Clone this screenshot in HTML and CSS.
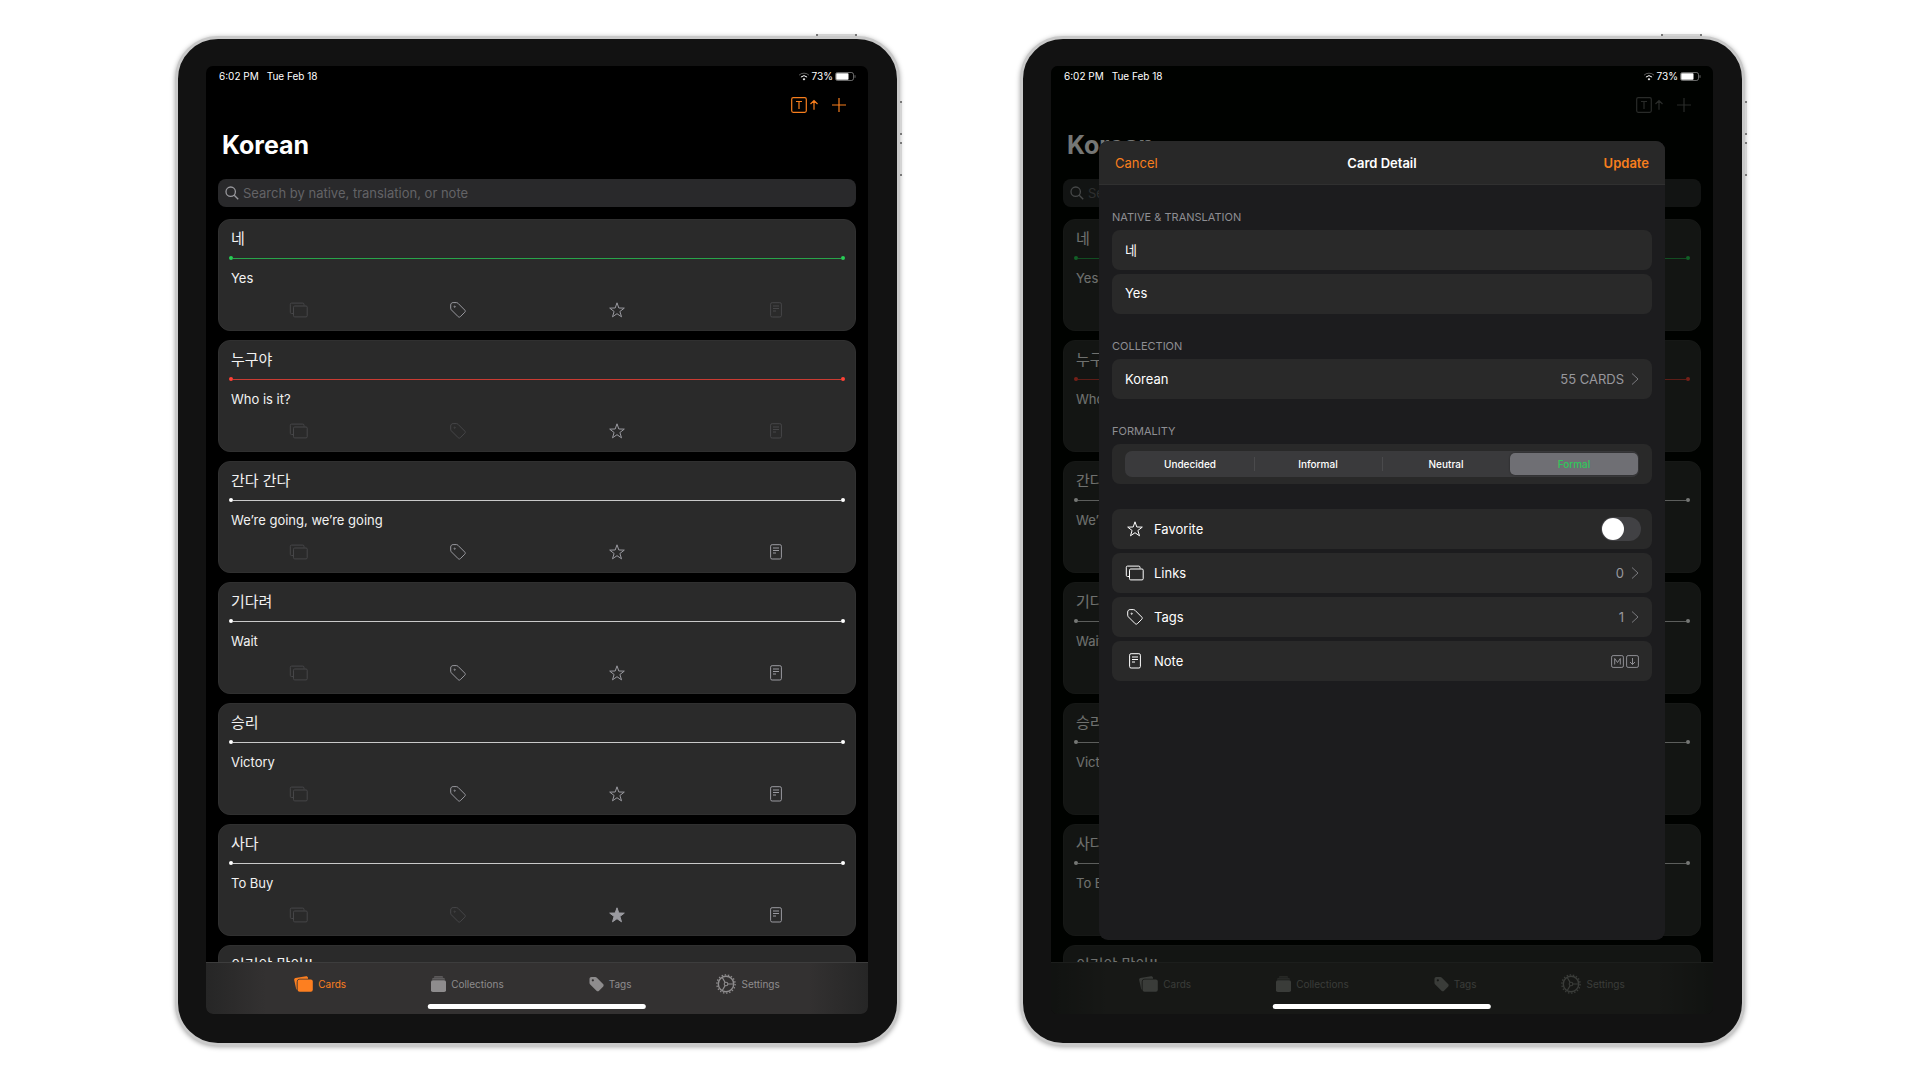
FILE: index.html
```html
<!DOCTYPE html>
<html lang="en">
<head>
<meta charset="utf-8">
<title>Korean cards</title>
<link rel="stylesheet" href="styles.css">
</head>
<body>
<svg class="sprite" aria-hidden="true">
  <symbol id="links" viewBox="0 0 20 18"><path d="M4.500 12.500H2.500a1.200 1.200 0 0 1-1.200-1.200V3.300a1.200 1.200 0 0 1 1.200-1.200h11.300A1.200 1.200 0 0 1 15 3.300V4.500"/><rect x="4.500" y="5" width="13.700" height="10.900" rx="1.200"/></symbol>
  <symbol id="tag" viewBox="0 0 18 18"><path d="M1.700 4v3.200c0 .7.200 1.200.7 1.700l6.800 6.800c.6.6 1.500.6 2.100 0l4.500-4.500c.6-.6.6-1.500 0-2.100L9 2.300c-.5-.5-1-.7-1.700-.7H4.100C2.700 1.600 1.700 2.600 1.700 4z"/><circle cx="5.700" cy="5.700" r=".6"/></symbol>
  <symbol id="star" viewBox="0 0 18 18"><path d="M9 1.800l1.800 5.200 5.500.1-4.400 3.400 1.600 5.300L9 12.700l-4.500 3.100 1.600-5.300L1.700 7.100l5.500-.1z"/></symbol>
  <symbol id="note" viewBox="0 0 18 18"><rect x="3.600" y="1.700" width="10.800" height="14.300" rx="1.500"/><path d="M6 5h6M6 7.500h6M6 10h3"/></symbol>
  <symbol id="search" viewBox="0 0 14 14"><circle cx="5.700" cy="5.700" r="4.700"/><path d="M9.200 9.200l4 4"/></symbol>
  <symbol id="sort" viewBox="0 0 28 16"><rect x=".7" y=".7" width="14.600" height="14.600" rx="1.500"/><path d="M5 4.500h6M8 4.500V12M23 12.700V3.500M19.500 7L23 3.500 26.500 7"/></symbol>
  <symbol id="plus" viewBox="0 0 14 14"><path d="M7 0v14M0 7h14"/></symbol>
  <symbol id="wifi" viewBox="0 0 12 9"><path d="M1 3.200a7.200 7.200 0 0 1 10 0" opacity=".35"/><path d="M2.900 5.100a4.500 4.500 0 0 1 6.200 0"/><path d="M6 8.400L4.600 6.900a2 2 0 0 1 2.800 0z" fill="currentColor" stroke="none"/></symbol>
  <symbol id="battery" viewBox="0 0 21 9"><rect x=".5" y=".5" width="18" height="8" rx="2" opacity=".4"/><rect x="1.200" y="1.200" width="12.300" height="6.600" rx=".8" fill="currentColor" stroke="none"/><path d="M20 3.200v2.600" opacity=".4"/></symbol>
  <symbol id="chevron" viewBox="0 0 8 12"><path d="M1 .5L7 6l-6 5.500"/></symbol>
  <symbol id="markdown" viewBox="0 0 28 13"><rect x=".6" y=".6" width="11.800" height="11.800" rx="1.500"/><path d="M3.700 9.500v-6l2.800 4 2.800-4v6"/><rect x="15.600" y=".6" width="11.800" height="11.800" rx="1.500"/><path d="M21.500 3v6.500M19 7l2.500 2.500L24 7"/></symbol>
  <symbol id="tab-cards" viewBox="0 0 19 16"><path d="M2.300 13.500L.2 3.900C0 3 .6 2.100 1.500 1.900L12 .2c.9-.2 1.700.4 1.900 1.300l.2 1.200H5.900C4 2.700 2.700 4 2.700 5.900v7.600z"/><rect x="3.600" y="3.600" width="15.200" height="12.200" rx="2"/></symbol>
  <symbol id="tab-collections" viewBox="0 0 15 16"><rect x="0" y="4.300" width="15" height="11.700" rx="1.800"/><path d="M1 3.600c.1-.9.600-1.300 1.300-1.300h10.400c.7 0 1.200.4 1.300 1.300z" opacity=".65"/><path d="M2.800 1.700C2.900.5 3.400 0 4.300 0h6.400c.9 0 1.400.5 1.500 1.700z" opacity=".45"/></symbol>
  <symbol id="tab-tags" viewBox="0 0 16 16"><path fill-rule="evenodd" d="M.5 2.700v4c0 .7.300 1.300.8 1.800l6.700 6.600c.8.8 2 .8 2.700 0l4.300-4.300c.8-.8.8-1.900 0-2.700L8.400 1.400C7.900.9 7.300.6 6.600.6h-4C1.400.6.500 1.500.500 2.700zm3.600 2.600a1.200 1.200 0 1 1 0-2.400 1.200 1.200 0 0 1 0 2.400z"/></symbol>
  <symbol id="tab-settings" viewBox="0 0 20 20"><g fill="none" stroke="currentColor"><circle cx="10" cy="10" r="9.100" stroke-width="1.400" stroke-dasharray="1.400 1.776"/><circle cx="10" cy="10" r="7.700" stroke-width="1.400"/><circle cx="10" cy="10" r="1.800" stroke-width="1.100"/><path d="M11.800 10h5.800M9.100 8.400L6.200 3.400M9.100 11.600l-2.900 5" stroke-width="1.100"/></g></symbol>
</svg>

<main class="stage">
  <section class="device" aria-label="Card list">
    <span class="power-button"></span><span class="volume-button"></span><span class="volume-button volume-down"></span>
    <div class="screen"></div>
  </section>

  <section class="device" aria-label="Card detail">
    <span class="power-button"></span><span class="volume-button"></span><span class="volume-button volume-down"></span>
    <div class="screen dimmed">
      <form class="sheet">
        <header class="sheet-header">
          <button class="text-button" type="button">Cancel</button>
          <h2 class="sheet-title">Card Detail</h2>
          <button class="text-button strong" type="button">Update</button>
        </header>
        <div class="sheet-body">
          <section class="group">
            <h3 class="group-title">NATIVE &amp; TRANSLATION</h3>
            <input class="row field" aria-label="Native" value="네" lang="ko">
            <input class="row field" aria-label="Translation" value="Yes">
          </section>
          <section class="group">
            <h3 class="group-title">COLLECTION</h3>
            <button class="row" type="button"><span class="row-label">Korean</span><span class="row-value">55 CARDS</span><svg class="chevron"><use href="#chevron"/></svg></button>
          </section>
          <section class="group">
            <h3 class="group-title">FORMALITY</h3>
            <div class="row">
              <div class="segments" role="radiogroup" aria-label="Formality">
                <label class="segment"><input type="radio" name="formality"><span>Undecided</span></label>
                <label class="segment"><input type="radio" name="formality"><span>Informal</span></label>
                <label class="segment"><input type="radio" name="formality"><span>Neutral</span></label>
                <label class="segment"><input type="radio" name="formality" checked><span>Formal</span></label>
              </div>
            </div>
          </section>
          <section class="group options">
            <label class="row"><svg class="icon"><use href="#star"/></svg><span class="row-label">Favorite</span><input class="toggle" type="checkbox"></label>
            <button class="row" type="button"><svg class="icon"><use href="#links"/></svg><span class="row-label">Links</span><span class="row-value">0</span><svg class="chevron"><use href="#chevron"/></svg></button>
            <button class="row" type="button"><svg class="icon"><use href="#tag"/></svg><span class="row-label">Tags</span><span class="row-value">1</span><svg class="chevron"><use href="#chevron"/></svg></button>
            <button class="row" type="button"><svg class="icon"><use href="#note"/></svg><span class="row-label">Note</span><svg class="markdown"><use href="#markdown"/></svg></button>
          </section>
        </div>
      </form>
    </div>
  </section>
</main>
<script src="app.js"></script>
</body>
</html>
```
FILE: styles.css
```css
* { box-sizing: border-box; }

body {
  margin: 0;
  background: #fff;
  color: #fff;
  font: 13px/20px Inter, "Noto Sans CJK KR", sans-serif;
}

button, input { font: inherit; color: inherit; }
button { background: none; border: 0; padding: 0; cursor: pointer; }
a { color: inherit; text-decoration: none; }
h1, h2, h3, p { margin: 0; }
svg { display: block; flex: none; fill: none; stroke: currentColor; }
.sprite { position: absolute; width: 0; height: 0; }

.stage {
  display: grid;
  grid-template-columns: 1fr 1fr;
  gap: 120px;
  padding: 36px 175px 34px;
}

/* Tablet shell */
.device {
  position: relative;
  padding: 27px 29px 29px 28px;
  background: #121212;
  border: 3px solid #c9c9c9;
  border-radius: 43px;
  box-shadow: 0 1px 5px rgba(0, 0, 0, .35);
}
.power-button, .volume-button { position: absolute; background: #d4d4d4; }
.power-button {
  top: -5px;
  right: 40px;
  width: 41px;
  height: 2px;
  border: solid #777;
  border-width: 0 2px;
}
.volume-button {
  top: 62px;
  right: -5px;
  width: 2px;
  height: 34px;
  border: solid #777;
  border-width: 2px 0;
}
.volume-down { top: 103px; }

.screen {
  position: relative;
  display: flex;
  flex-direction: column;
  aspect-ratio: 662 / 948;
  overflow: hidden;
  background: #000;
  border-radius: 7px;
}

/* Status bar */
.status-bar {
  position: relative;
  z-index: 3;
  display: flex;
  align-items: center;
  gap: 8px;
  height: 20px;
  padding: 0 12px 0 13px;
  font-size: 10px;
}
.status-right { display: flex; align-items: center; gap: 2px; margin-left: auto; }
.wifi { width: 12px; height: 9px; }
.battery { width: 21px; height: 9px; }

/* List header */
.toolbar {
  display: flex;
  justify-content: flex-end;
  align-items: center;
  gap: 13px;
  height: 38px;
  padding-right: 22px;
  color: #f77e1d;
}
.sort-icon { width: 28px; height: 16px; stroke-width: 1.2; }
.plus-icon { width: 14px; height: 14px; stroke-width: 1.2; }
.title { padding: 1px 0 0 16px; font-size: 25px; line-height: 40px; font-weight: 700; }
.search {
  display: flex;
  align-items: center;
  gap: 4px;
  height: 28px;
  margin: 14px 12px 0;
  padding: 0 7px 1px;
  background: #29292b;
  border-radius: 8px;
  color: #98989d;
}
.search-icon { width: 14px; height: 14px; stroke-width: 1.3; }
.search-input { flex: 1; min-width: 0; padding: 0; border: 0; outline: 0; background: none; }
.search-input::placeholder { color: #636366; opacity: 1; }

/* Cards */
.cards {
  display: flex;
  flex-direction: column;
  gap: 9px;
  flex: 1;
  min-height: 0;
  overflow: hidden;
  margin: 0;
  padding: 12px 12px 0;
  list-style: none;
}
.card {
  flex: none;
  padding: 9px 0 8px;
  background: #2a2a2a;
  border: 1px solid #303030;
  border-radius: 12px;
}
.card-native, .card-translation { padding: 0 12px; color: #f2f2f2; }
.card-native { font-size: 15px; }
.rule {
  display: flex;
  align-items: center;
  height: 4px;
  margin: 7px 10px 8px;
  color: #fff;
}
.rule::before, .rule::after { content: ""; width: 4px; height: 4px; border-radius: 50%; background: currentColor; }
.rule span { flex: 1; height: 1px; background: currentColor; opacity: .75; }
.rule.formal { color: #28cd55; }
.rule.informal { color: #ff4136; }
.card-actions { display: grid; grid-template-columns: repeat(4, 1fr); margin-top: 10px; }
.card-action { display: grid; place-items: center; height: 24px; color: #9a9aa0; }
.card-action.muted { color: #464648; }
.card-action.filled svg { fill: currentColor; }
.icon { width: 20px; height: 18px; stroke-linejoin: round; }

/* Tab bar */
.tab-bar {
  display: flex;
  justify-content: center;
  gap: 85px;
  height: 52px;
  padding-top: 6px;
  background: linear-gradient(90deg, #262626, #333131 9%, #333131 91%, #262626);
  border-top: 1px solid #3d3d3d;
  color: #8e8c8d;
  font-size: 10px;
  line-height: 30px;
}
.tab { display: flex; align-items: center; gap: 5px; height: 30px; }
.tab.active { color: #fd7f20; }
.tab svg { width: 19px; height: 16px; fill: currentColor; stroke: none; }
.tab .small { width: 15px; }
.tab .gear { width: 20px; height: 20px; }
.home-indicator {
  position: absolute;
  z-index: 3;
  left: 50%;
  bottom: 5px;
  width: 33%;
  height: 5px;
  transform: translateX(-50%);
  border-radius: 3px;
  background: #fff;
}

/* Screen behind the sheet */
.dimmed::after {
  content: "";
  position: absolute;
  inset: 0;
  z-index: 1;
  background: rgba(0, 3, 0, .54);
}
.dimmed .toolbar { color: #5a5a5a; }
.dimmed .tab, .dimmed .tab.active { color: #7e7e7c; }

/* Card detail sheet */
.sheet {
  position: absolute;
  z-index: 2;
  inset: 75px 48px 74px;
  overflow: hidden;
  background: #1c1c1e;
  border-radius: 9px;
}
.sheet-header {
  display: grid;
  grid-template-columns: 1fr auto 1fr;
  align-items: center;
  height: 44px;
  padding: 0 16px;
  background: #282828;
  border-bottom: 1px solid #303030;
}
.sheet-title { font-size: 13px; line-height: 20px; font-weight: 600; }
.text-button { justify-self: start; color: #f77e1d; }
.text-button.strong { justify-self: end; font-weight: 600; }
.sheet-body { display: flex; flex-direction: column; gap: 22px; padding: 22px 13px; }
.group { display: flex; flex-direction: column; gap: 4px; }
.group-title { margin-bottom: -1px; color: #8e8e93; font-size: 11px; line-height: 20px; font-weight: 400; }
.options { padding-top: 3px; }
.row {
  display: flex;
  align-items: center;
  width: 100%;
  height: 40px;
  padding: 0 13px;
  background: #292929;
  border: 0;
  border-radius: 8px;
  text-align: left;
}
.field { padding-bottom: 2px; outline: 0; }
.row .icon { margin-right: 9px; }
.row-label { flex: 1; }
.row-value { color: #98989d; }
.chevron { width: 8px; height: 12px; margin-left: 7px; color: #7a7a7e; }
.markdown { width: 28px; height: 13px; color: #8e8e93; }

.segments {
  display: grid;
  grid-template-columns: repeat(4, 1fr);
  flex: 1;
  height: 26px;
  padding: 2px 1px;
  background: #3a3a3c;
  border-radius: 7px;
}
.segment { position: relative; display: grid; text-align: center; font-size: 10px; font-weight: 500; line-height: 22px; }
.segment input { position: absolute; opacity: 0; margin: 0; }
.segment span { border-radius: 5px; }
.segment + .segment::before {
  content: "";
  position: absolute;
  left: 0;
  top: 4px;
  width: 1px;
  height: 14px;
  background: #4a4a4c;
}
.segment:last-child::before { display: none; }
.segment input:checked + span { background: #6f6f74; color: #30c85a; box-shadow: 0 0 2px rgba(0, 0, 0, .4); }

.toggle {
  appearance: none;
  display: flex;
  align-items: center;
  width: 40px;
  height: 24px;
  margin: 0 -2px 0 0;
  padding: 1px;
  background: #414144;
  border-radius: 12px;
}
.toggle::before { content: ""; width: 22px; height: 22px; border-radius: 50%; background: #fff; }
```
FILE: app.js
```js
const cards = [
  { native: '네', translation: 'Yes', tone: 'formal', active: ['tag'] },
  { native: '누구야', translation: 'Who is it?', tone: 'informal', active: [] },
  { native: '간다 간다', translation: 'We’re going, we’re going', tone: '', active: ['tag', 'note'] },
  { native: '기다려', translation: 'Wait', tone: '', active: ['tag', 'note'] },
  { native: '승리', translation: 'Victory', tone: '', active: ['tag', 'note'] },
  { native: '사다', translation: 'To Buy', tone: '', active: ['note'], favorite: true },
  { native: '이거야 맞아!!', translation: '', tone: '', active: [] }
];

const action = (card, name) => {
  const on = name === 'star' || card.active.includes(name);
  const state = (on ? '' : ' muted') + (name === 'star' && card.favorite ? ' filled' : '');
  return `<button class="card-action${state}" type="button" aria-label="${name}"><svg class="icon"><use href="#${name}"/></svg></button>`;
};

const cardItem = card => `
  <li class="card">
    <p class="card-native" lang="ko">${card.native}</p>
    <div class="rule ${card.tone}"><span></span></div>
    <p class="card-translation">${card.translation}</p>
    <div class="card-actions">${['links', 'tag', 'star', 'note'].map(n => action(card, n)).join('')}</div>
  </li>`;

const listScreen = `
  <div class="status-bar">
    <span>6:02 PM</span><span>Tue Feb 18</span>
    <span class="status-right"><svg class="wifi"><use href="#wifi"/></svg>73%<svg class="battery"><use href="#battery"/></svg></span>
  </div>
  <div class="toolbar">
    <button type="button" aria-label="Sort"><svg class="sort-icon"><use href="#sort"/></svg></button>
    <button type="button" aria-label="Add card"><svg class="plus-icon"><use href="#plus"/></svg></button>
  </div>
  <h1 class="title">Korean</h1>
  <label class="search"><svg class="search-icon"><use href="#search"/></svg><input class="search-input" type="text" aria-label="Search cards" placeholder="Search by native, translation, or note"></label>
  <ul class="cards">${cards.map(cardItem).join('')}</ul>
  <nav class="tab-bar">
    <a class="tab active" href="#cards"><svg><use href="#tab-cards"/></svg>Cards</a>
    <a class="tab" href="#collections"><svg class="small"><use href="#tab-collections"/></svg>Collections</a>
    <a class="tab" href="#tags"><svg class="small"><use href="#tab-tags"/></svg>Tags</a>
    <a class="tab" href="#settings"><svg class="gear"><use href="#tab-settings"/></svg>Settings</a>
  </nav>
  <span class="home-indicator"></span>`;

document.querySelectorAll('.screen').forEach(screen => screen.insertAdjacentHTML('afterbegin', listScreen));
```
